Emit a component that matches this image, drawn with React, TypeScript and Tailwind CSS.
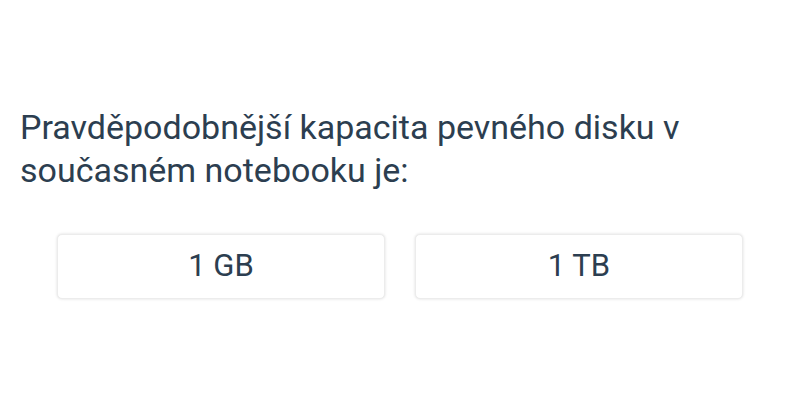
export default function App() {
  const options = ['1 GB', '1 TB'];
  return (
    <div className="w-[800px] h-[400px] bg-white font-['Roboto',sans-serif] text-[#2c3e50]">
      <div className="pt-[106px] px-5">
        <p className="text-[34px] leading-[43px]">
          Pravděpodobnější kapacita pevného disku v současném notebooku je:
        </p>
      </div>
      <div className="mt-[42px] flex justify-center gap-[30px]">
        {options.map((o) => (
          <button
            key={o}
            className="w-[328px] h-[65px] rounded-[5px] border border-[#ececec] bg-white shadow-[0_0_3px_rgba(0,0,0,0.14)] text-[31px]"
          >
            {o}
          </button>
        ))}
      </div>
    </div>
  );
}
